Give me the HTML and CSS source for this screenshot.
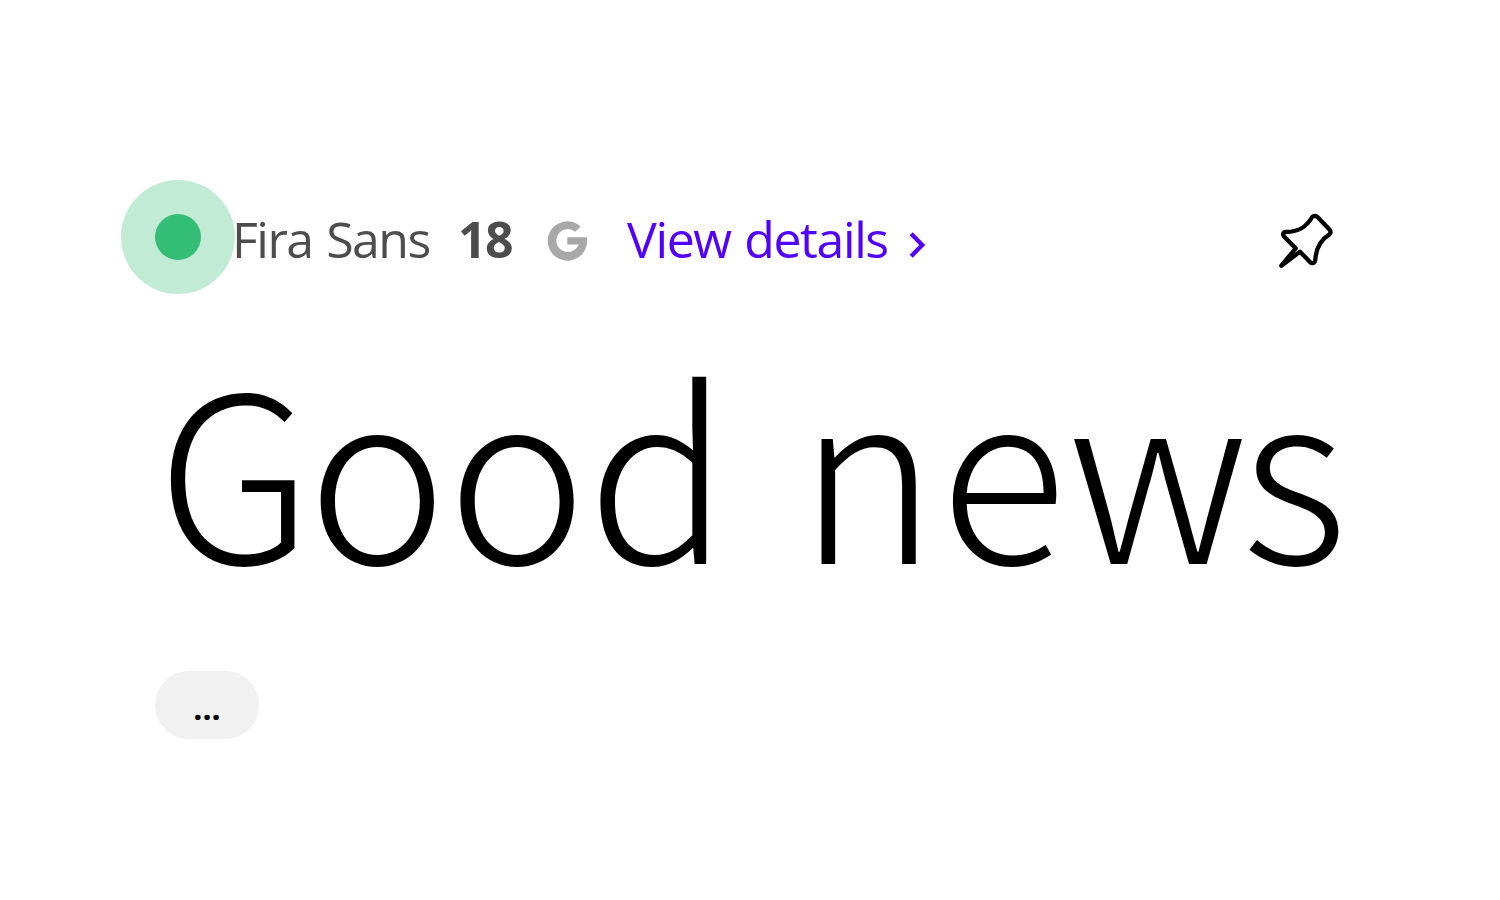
FILE: index.html
```
<!DOCTYPE html>
<html lang="en">
<head>
    <meta charset="UTF-8">
    <meta name="viewport" content="width=device-width, initial-scale=1.0">
    <title>Fira Sans</title>
    <link rel="stylesheet" href="styles.css">
</head>
<body>

<div class="card">
    <div class="card-header">
        <div class="status"><div class="status-dot"></div></div>
        <span class="font-name">Fira Sans</span>
        <span class="count">18</span>
        <svg class="google" viewBox="0 0 40 40" width="40" height="40">
            <path d="M33.7 5.500A19.700 19.700 0 1 0 39.700 16.300H20.300V23.600H31.600A11.500 11.500 0 1 1 28.200 10.700Z" fill="#a8a8a8"/>
        </svg>
        <a class="details" href="#">View details</a>
        <svg class="chevron" viewBox="0 0 18 28" width="18" height="28">
            <path d="M3.2 2.8L14.200 14L3.200 25.200" fill="none" stroke="#5200ff" stroke-width="4.300"/>
        </svg>
        <svg class="pin" viewBox="0 0 60 60" width="60" height="60">
            <path d="M36.300 6.800Q37 6 39 6Q40.500 6 41.500 7L53.500 19.500Q55.500 22 53.500 24.300C44 30 40 38 39.300 50Q38.500 54.500 34.500 52.500L24 41.700L5.300 55.700L19.700 38.300L8 26.500Q5.500 22.500 10 22C22 22 30 18 36.300 6.800Z" fill="none" stroke="#000" stroke-width="4.300" stroke-linejoin="round"/>
        </svg>
    </div>

    <h1 class="sample">
        <span class="word"><span class="kern-g">G</span>ood</span>
        <span class="word"><span class="kern-n">n</span><span class="kern-e">e</span><span class="kern-w">w</span>s</span>
    </h1>

    <button class="more">...</button>
</div>

</body>
</html>
```
FILE: styles.css
```
body {
    margin: 0;
    background-color: #fff;
    font-family: "Open Sans", "Noto Sans", sans-serif;
}
.card {
    padding: 180px 155px 0 121px;
}
.card-header {
    display: flex;
    height: 114px;
    font-size: 50px;
    line-height: 119px;
    white-space: nowrap;
}
.status {
    display: flex;
    align-items: center;
    justify-content: center;
    width: 114px;
    height: 114px;
    border-radius: 50%;
    background-color: #c2ebd6;
}
.status-dot {
    width: 46px;
    height: 46px;
    border-radius: 50%;
    background-color: #34be75;
}
.font-name {
    width: 226px;
    margin-left: -3px;
    color: #4d4d4d;
    letter-spacing: -1.5px;
    word-spacing: 2px;
}
.count {
    width: 89px;
    color: #4d4d4d;
    font-weight: 700;
    letter-spacing: -1.5px;
}
.google {
    margin-top: 41px;
}
.details {
    width: 281px;
    margin-left: 40px;
    color: #5200ff;
    letter-spacing: -1.4px;
    word-spacing: 2px;
    text-decoration: none;
}
.chevron {
    margin-top: 51px;
}
.pin {
    margin: 30px 9px 0 auto;
}
.sample {
    display: flex;
    height: 260px;
    margin: 56px 0 0 36px;
    font-family: "Noto Sans CJK JP", sans-serif;
    font-size: 235px;
    font-weight: 300;
    line-height: 223px;
    white-space: nowrap;
}
.word {
    flex: none;
    width: 641px;
    letter-spacing: 0.3px;
}
.kern-g {
    font-size: 231px;
    letter-spacing: -5px;
}
.kern-n {
    letter-spacing: 2.5px;
}
.kern-e {
    letter-spacing: 2px;
}
.kern-w {
    letter-spacing: -7px;
}
.more {
    display: block;
    width: 104px;
    height: 68px;
    margin: 61px 0 0 34px;
    padding: 0;
    border: none;
    border-radius: 34px;
    background-color: #f1f1f1;
    color: #000;
    font-family: "Open Sans", sans-serif;
    font-size: 32px;
    font-weight: 700;
    line-height: 74px;
}
```
